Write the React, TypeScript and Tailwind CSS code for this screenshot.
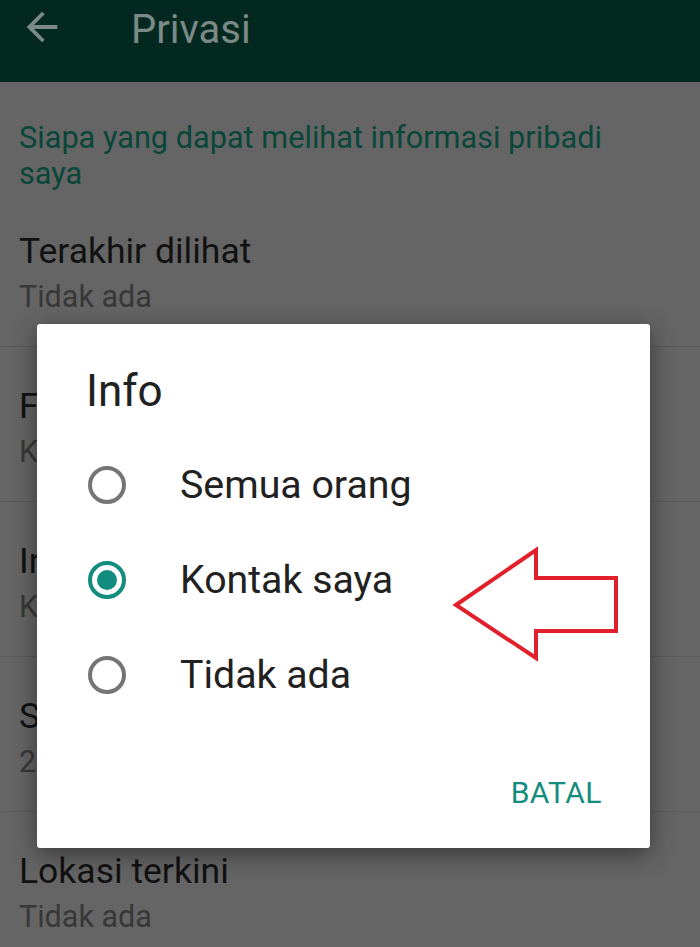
import React from "react";

const rows = [
  { title: "Terakhir dilihat", sub: "Tidak ada" },
  { title: "Foto profil", sub: "Kontak saya" },
  { title: "Info", sub: "Kontak saya" },
  { title: "Status", sub: "2 kontak dikecualikan" },
  { title: "Lokasi terkini", sub: "Tidak ada" },
];

const options = [
  { label: "Semua orang", checked: false },
  { label: "Kontak saya", checked: true },
  { label: "Tidak ada", checked: false },
];

const Radio = ({ checked }: { checked: boolean }) =>
  checked ? (
    <div className="w-[38px] h-[38px] rounded-full border-[4px] border-[#128c7e] flex items-center justify-center">
      <div className="w-[20px] h-[20px] rounded-full bg-[#128c7e]" />
    </div>
  ) : (
    <div className="w-[38px] h-[38px] rounded-full border-[4px] border-[#757575]" />
  );

const App = () => {
  return (
    <div className="relative w-[700px] h-[947px] overflow-hidden bg-[#656565] font-['Roboto',sans-serif]">
      {/* toolbar */}
      <div className="h-[82px] bg-[#02281f] flex items-start">
        <svg
          viewBox="0 0 24 24"
          className="w-[46px] h-[46px] ml-[19px] mt-[4px]"
          fill="#7b8a86"
        >
          <path d="M20 11H7.83l5.59-5.59L12 4l-8 8 8 8 1.41-1.41L7.83 13H20v-2z" />
        </svg>
        <div className="ml-[66px] mt-[10px] text-[40px] leading-[40px] text-[#7b8a86]">
          Privasi
        </div>
      </div>

      {/* list behind the dialog */}
      <div className="pl-[19px] pt-[38px] text-[30.7px] leading-[36px] text-[#0a463a] pr-[60px]">
        Siapa yang dapat melihat informasi pribadi saya
      </div>
      <div>
        {rows.map((row, i) => (
          <div
            key={i}
            className="pl-[19px] pt-[39px] pb-[31px] border-b border-[#5a5a5a]"
          >
            <div className="text-[35.5px] leading-[40px] text-[#121212]">
              {row.title}
            </div>
            <div className="mt-[8px] text-[30.5px] leading-[36px] text-[#383838]">
              {row.sub}
            </div>
          </div>
        ))}
      </div>

      {/* dialog */}
      <div className="absolute left-[37px] top-[324px] w-[613px] h-[524px] bg-white rounded-[3px] shadow-[0_6px_24px_rgba(0,0,0,0.45)] flex flex-col">
        <div className="pl-[49px] pt-[45px] text-[44px] leading-[44px] text-[#212121]">
          Info
        </div>
        <div className="mt-[24px] flex flex-col">
          {options.map((opt) => (
            <div key={opt.label} className="h-[95px] flex items-center pl-[51px]">
              <Radio checked={opt.checked} />
              <div className="ml-[54px] text-[39.3px] leading-[44px] text-[#212121]">
                {opt.label}
              </div>
            </div>
          ))}
        </div>
        <div className="mt-auto mb-[38px] pr-[48px] flex justify-end">
          <div className="text-[30px] leading-[34px] text-[#128c7e] tracking-[0.5px]">
            BATAL
          </div>
        </div>
      </div>

      {/* red annotation arrow */}
      <svg
        className="absolute left-0 top-0"
        width="700"
        height="947"
        viewBox="0 0 700 947"
      >
        <polygon
          points="456,605 536,550 536,578 616,578 616,631 536,631 536,658"
          fill="none"
          stroke="#e2202b"
          strokeWidth="4"
          strokeLinejoin="miter"
        />
      </svg>
    </div>
  );
};

export default App;
